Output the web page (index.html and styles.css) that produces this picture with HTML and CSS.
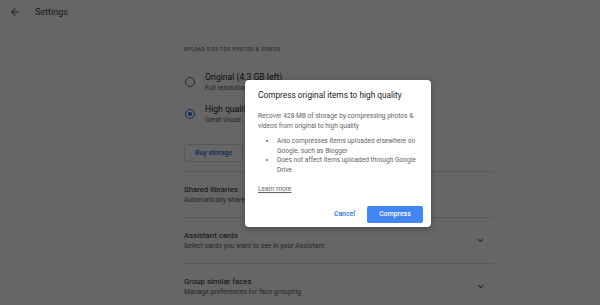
FILE: index.html
```
<!DOCTYPE html>
<html>
<head>
<meta charset="utf-8">
<link rel="stylesheet" href="styles.css">
</head>
<body>
<div class="page">
  <header class="topbar">
    <svg class="back" width="12" height="12" viewBox="0 0 24 24"><path d="M20 11H7.83l5.59-5.59L12 4l-8 8 8 8 1.41-1.41L7.83 13H20v-2z" fill="#5f6368"/></svg>
    <span class="title">Settings</span>
  </header>
  <main class="content">
    <div class="label">UPLOAD SIZE FOR PHOTOS &amp; VIDEOS</div>
    <div class="radio-row first">
      <span class="radio"></span>
      <div class="rtext">
        <div class="rmain">Original (4.3 GB left)</div>
        <div class="rsub">Full resolution</div>
      </div>
    </div>
    <div class="radio-row second">
      <span class="radio on"></span>
      <div class="rtext">
        <div class="rmain">High quality</div>
        <div class="rsub">Great visual</div>
      </div>
    </div>
    <div class="btnrow"><span class="buy">Buy storage</span></div>
    <div class="item">
      <div class="itext">
        <div class="imain">Shared libraries</div>
        <div class="isub">Automatically share</div>
      </div>
    </div>
    <div class="item">
      <div class="itext">
        <div class="imain">Assistant cards</div>
        <div class="isub">Select cards you want to see in your Assistant</div>
      </div>
      <svg class="chev" width="11" height="11" viewBox="0 0 24 24"><path d="M7.41 8.59L12 13.17l4.59-4.58L18 10l-6 6-6-6z" fill="#3c4043"/></svg>
    </div>
    <div class="item">
      <div class="itext">
        <div class="imain">Group similar faces</div>
        <div class="isub">Manage preferences for face grouping</div>
      </div>
      <svg class="chev" width="11" height="11" viewBox="0 0 24 24"><path d="M7.41 8.59L12 13.17l4.59-4.58L18 10l-6 6-6-6z" fill="#3c4043"/></svg>
    </div>
  </main>
</div>
<div class="scrim"></div>
<div class="dialog">
  <div class="dtitle">Compress original items to high quality</div>
  <p class="dbody">Recover 428 MB of storage by compressing photos &amp; videos from original to high quality</p>
  <ul class="dlist">
    <li>Also compresses items uploaded elsewhere on Google, such as Blogger</li>
    <li>Does not affect items uploaded through Google Drive</li>
  </ul>
  <a class="learn">Learn more</a>
  <div class="actions">
    <span class="cancel">Cancel</span>
    <span class="compress">Compress</span>
  </div>
</div>
</body>
</html>
```
FILE: styles.css
```
* { box-sizing: border-box; }
html, body { margin: 0; padding: 0; }
body {
  width: 600px; height: 305px; overflow: hidden;
  background: #fff;
  font-family: Roboto, "Noto Sans", sans-serif;
  color: #202124;
  position: relative;
}
.page { width: 600px; height: 305px; }
.topbar {
  height: 24px; display: flex; align-items: center;
  padding-left: 9px;
}
.back { margin-right: 14px; }
.title { font-size: 9px; color: #3c4043; }
.content {
  margin-left: 184px; width: 309px;
  padding-top: 21px;
}
.label {
  font-size: 4.6px; letter-spacing: 0.6px; color: #5f6368;
  font-weight: 500; height: 10px; line-height: 10px;
}
.radio-row { display: flex; align-items: center; height: 22px; }
.radio-row.first { margin-top: 16px; }
.radio-row.second { margin-top: 10px; }
.radio {
  width: 10px; height: 10px; border-radius: 50%;
  border: 1.3px solid #5f6368; margin-left: 1px; margin-right: 10px;
  flex: none; position: relative;
}
.radio.on { border-color: #1a73e8; }
.radio.on::after {
  content: ""; position: absolute; left: 1.5px; top: 1.5px;
  width: 4.4px; height: 4.4px; border-radius: 50%; background: #1a73e8;
}
.rmain { font-size: 8.6px; line-height: 12px; color: #202124; white-space: nowrap; }
.rsub { font-size: 6.8px; line-height: 10px; color: #5f6368; white-space: nowrap; }
.btnrow { margin-top: 15px; height: 18px; }
.buy {
  display: inline-flex; align-items: center; height: 18px;
  padding: 0 10px; border: 1px solid #dadce0; border-radius: 3px;
  font-size: 7px; color: #1a73e8; font-weight: 500;
  white-space: nowrap;
}
.item {
  border-top: 1px solid #e0e0e0;
  height: 46px; display: flex; align-items: center; justify-content: space-between;
}
.btnrow + .item { margin-top: 13px; }
.imain { font-size: 7.8px; line-height: 11px; color: #202124; }
.isub { font-size: 6.9px; line-height: 10px; color: #5f6368; white-space: nowrap; }
.chev { margin-right: 7px; }
.scrim {
  position: absolute; inset: 0; background: rgba(0,0,0,0.6);
}
.dialog {
  position: absolute; left: 245px; top: 80px;
  width: 186px; height: 147px;
  background: #fff; border-radius: 4px;
  box-shadow: 0 2px 6px rgba(0,0,0,0.3);
  padding: 10px 11px 0 13px;
}
.dtitle { font-size: 8.3px; color: #202124; line-height: 11px; }
.dbody {
  margin: 10px 0 0; font-size: 6.6px; line-height: 10px; color: #5f6368;
}
.dlist {
  margin: 6px 0 0; padding-left: 19px; font-size: 6.6px; line-height: 9.7px; color: #5f6368;
}
.learn {
  display: inline-block; margin-top: 1px; font-size: 6.6px; color: #5f6368;
  text-decoration: underline; line-height: 10px;
}
.actions {
  display: flex; justify-content: flex-end; align-items: center;
  margin-top: 11px; margin-right: -3px;
}
.cancel { font-size: 6.9px; color: #1a73e8; font-weight: 500; margin-right: 12px; }
.compress {
  width: 56px; height: 17px; border-radius: 2px; background: #4285f4;
  color: #fff; font-size: 6.9px; font-weight: 500;
  display: flex; align-items: center; justify-content: center;
}
```
